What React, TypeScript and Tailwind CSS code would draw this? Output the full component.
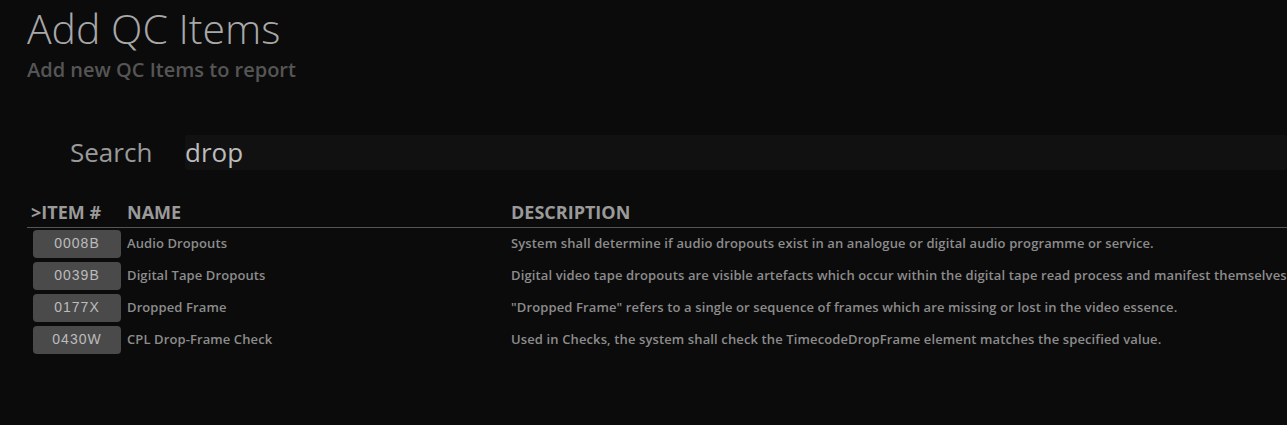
import React from "react";

const rows = [
  { id: "0008B", name: "Audio Dropouts", desc: "System shall determine if audio dropouts exist in an analogue or digital audio programme or service." },
  { id: "0039B", name: "Digital Tape Dropouts", desc: "Digital video tape dropouts are visible artefacts which occur within the digital tape read process and manifest themselves visibly within the picture." },
  { id: "0177X", name: "Dropped Frame", desc: "\"Dropped Frame\" refers to a single or sequence of frames which are missing or lost in the video essence." },
  { id: "0430W", name: "CPL Drop-Frame Check", desc: "Used in Checks, the system shall check the TimecodeDropFrame element matches the specified value." },
];

export default function App() {
  return (
    <div className="w-[1287px] h-[425px] overflow-hidden bg-[#0b0b0b] font-['Open_Sans',sans-serif]">
      <div className="pl-[27px] pt-[3px]">
        <h1 className="text-[41px] leading-[50px] font-light text-[#a8a8a8]">Add QC Items</h1>
        <p className="text-[20px] leading-[28px] font-semibold text-[#555555] mt-[3px]">Add new QC Items to report</p>
      </div>
      <div className="flex items-center mt-[50px] h-[36px]">
        <div className="w-[185px] shrink-0 pl-[70px] text-[26px] text-[#9a9a9a]">Search</div>
        <div className="flex-1 h-[35px] bg-[#111111] rounded-[3px] flex items-center text-[26px] text-[#bdbdbd] leading-none">drop</div>
      </div>
      <div className="ml-[27px] mt-[29px] whitespace-nowrap">
        <div className="flex h-[29px] items-end pb-[4px] border-b border-[#555555] text-[18px] font-bold text-[#9a9a9a] leading-[22px]">
          <div className="w-[100px] shrink-0 pl-[4px]">&gt;ITEM #</div>
          <div className="w-[384px] shrink-0">NAME</div>
          <div className="shrink-0">DESCRIPTION</div>
        </div>
        <div className="pt-[2px] flex flex-col gap-[4px]">
          {rows.map((r) => (
            <div key={r.id} className="flex items-center h-[28px]">
              <div className="w-[100px] shrink-0 pl-[6px]">
                <div className="w-[88px] h-[28px] rounded-[4px] bg-[#4a4a4a] flex items-center justify-center font-['Liberation_Sans',sans-serif] text-[14px] text-[#bcbcbc] tracking-[1px] pb-[2px]">
                  {r.id}
                </div>
              </div>
              <div className="w-[384px] shrink-0 text-[13px] font-semibold text-[#8c8c8c] tracking-[0.1px]">{r.name}</div>
              <div className="shrink-0 text-[13px] font-semibold text-[#8c8c8c] tracking-[0.12px]">{r.desc}</div>
            </div>
          ))}
        </div>
      </div>
    </div>
  );
}
